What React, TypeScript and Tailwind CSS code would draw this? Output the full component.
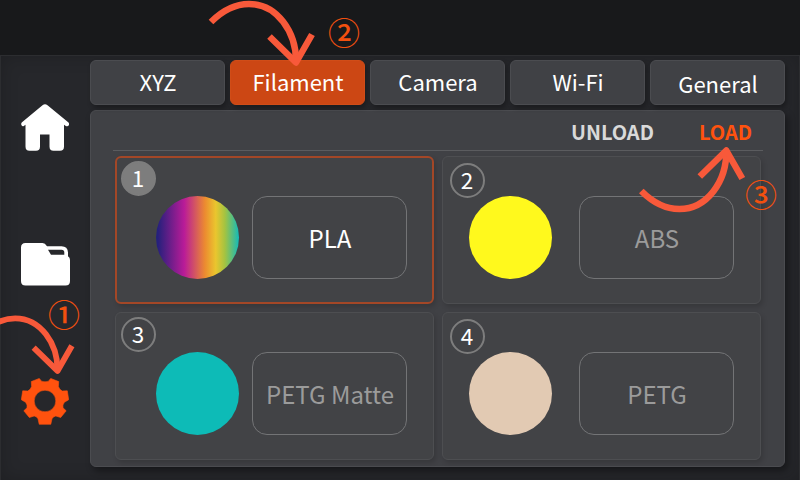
import React from "react";

const FONT = "font-['Noto_Sans_CJK_SC','Noto_Sans',sans-serif]";

function HomeIcon() {
  return (
    <svg className="block h-[47px] w-12" viewBox="0 0 48 47" fill="#fff">
      <path d="M21.5 1.2Q24 -0.8 26.5 1.2L47.2 18.2Q48.6 19.6 47.8 21.2Q46.8 23 44.8 22L43 20.8V42.5Q43 46.8 39 46.8H32.5Q28.500 46.8 28.500 42.5V30.500H19V42.500Q19 46.800 15 46.800H8.500Q4.500 46.800 4.500 42.500V20.800L2.800 22Q1.200 22.700 .4 21Q-.2 19.500 1 18.300Z" />
    </svg>
  );
}

function FolderIcon() {
  return (
    <svg className="block h-[43px] w-[49px]" viewBox="0 0 49 43">
      <path fill="#fff" fillRule="evenodd" d="M4.500 0H21.500Q24 0 26 3.300H40.500Q46.700 3.300 47 9.500V13.300Q49 14.500 49 17V38Q49 42.500 44.500 42.500H4.500Q0 42.500 0 38V4.500Q0 0 4.500 0ZM27 6.800L30 11.800H43.300V9.500Q43.300 6.800 40.500 6.800Z" />
    </svg>
  );
}

function GearIcon() {
  return (
    <svg className="block h-[47px] w-12" viewBox="0 0 48 47">
      <path fill="#ff520e" fillRule="evenodd" stroke="#ff520e" strokeWidth=".6" strokeLinejoin="round" d="M10.300 3.600L18.300 .4L20.500 3.200Q24 4.500 27.500 3.200L29.700 .4L37.700 3.600L37.400 8.500Q38.500 12 41.200 13L46.300 12.800L47.700 21.700L43.400 24.300Q41.200 27 42 29.800L45.200 32.800L39.700 39.500L34.800 38Q32 38.500 31 40.800L29.800 46.300H18.200L17 40.800Q16 38.500 13.200 38L8.300 39.500L2.800 32.800L6 29.800Q6.800 27 4.600 24.300L.3 21.700L1.700 12.800L6.800 13Q9.500 12 10.600 8.500ZM24 12.200A10.800 10.800 0 1 0 24 33.800A10.800 10.800 0 1 0 24 12.200Z" />
    </svg>
  );
}

function Tab({ label, active = false, low = false }: { label: string; active?: boolean; low?: boolean }) {
  return (
    <div
      className={`flex h-[45px] w-[135px] items-center justify-center rounded-md border pl-px text-[22px] leading-[40px] text-white shadow-[2px_3px_5px_rgba(0,0,0,0.3)] ${
        active ? "border-[#d04d18] bg-[#cc4714]" : "border-[#4b4c50] bg-[#404145]"
      } ${low ? "pt-px" : "pb-[3px]"}`}
    >
      {label}
    </div>
  );
}

interface Spool {
  slot: number;
  name: string;
  swatch: string;
  selected?: boolean;
}

const spools: Spool[] = [
  {
    slot: 1,
    name: "PLA",
    swatch: "bg-[linear-gradient(90deg,#25207c_2%,#b91b98_34%,#ec8b30_59%,#eac62e_72%,#a4c341_83%,#12baba_100%)]",
    selected: true,
  },
  { slot: 2, name: "ABS", swatch: "bg-[#fff91d]" },
  { slot: 3, name: "PETG Matte", swatch: "bg-[#0dbbb7]" },
  { slot: 4, name: "PETG", swatch: "bg-[#e2cab3]" },
];

function SpoolCard({ slot, name, swatch, selected }: Spool) {
  const right = slot % 2 === 0;
  return (
    <div
      className={`relative flex h-[148px] w-[319px] items-center rounded-md bg-[#424346] shadow-[2px_3px_5px_rgba(0,0,0,0.15)] ${
        selected ? "border-2 border-[#a34727]" : "border border-[#4d4e51]"
      } ${right ? "gap-[27px] pl-[26px]" : selected ? "gap-[13px] pl-[39px]" : "gap-[13px] pl-10"}`}
    >
      <div
        className={`absolute flex size-[35px] items-center justify-center rounded-full border-2 border-[#7d7d7d] pb-[3px] pr-px text-[22.500px] leading-none text-white ${
          right ? "left-[7px] top-[6px]" : selected ? "left-1 top-[3px] bg-[#7d7d7d]" : "left-[5px] top-1"
        }`}
      >
        {slot}
      </div>
      <div className={`mt-[15px] size-[83px] rounded-full ${swatch}`} />
      <div
        className={`mt-[15px] flex h-[83px] w-[155px] items-center justify-center whitespace-nowrap rounded-[15px] border border-[#737476] pl-px text-[24px] ${
          selected ? "text-white" : "text-[#9b9b9b]"
        }`}
      >
        {name}
      </div>
    </div>
  );
}

function Arrow({ transform }: { transform?: string }) {
  return (
    <g transform={transform}>
      <path d="M211 22C223 10 236 4 249 4C277 4 296.500 32 296 62.500" />
      <path d="M269.500 36.500L296 62.500L312 34.500" />
    </g>
  );
}

function Arrows() {
  return (
    <svg className="pointer-events-none absolute inset-0 h-[480px] w-[800px]" viewBox="0 0 800 480" fill="none" stroke="#f8593a" strokeWidth="6.500" strokeLinejoin="round">
      <Arrow />
      <Arrow transform="translate(-208.900 314.700) scale(.9)" />
      <Arrow transform="translate(430.300 213) scale(1 -1)" />
    </svg>
  );
}

function StepMark({ mark, place }: { mark: string; place: string }) {
  return <span className={`absolute text-[32px] font-medium leading-[34px] text-[#f2500f] ${place}`}>{mark}</span>;
}

export default function App() {
  return (
    <div className={`relative flex h-[480px] w-[800px] flex-col overflow-hidden bg-[#26272b] ${FONT}`}>
      <header className="h-[55px] shrink-0 bg-[#18191b]" />
      <div className="flex h-[425px] border border-b-0 border-[#2c2d30] shadow-[inset_0_0_18px_rgba(0,0,0,0.2)]">
        <nav className="flex w-[89px] shrink-0 flex-col pl-5 pt-12">
          <HomeIcon />
          <div className="mt-[92px]">
            <FolderIcon />
          </div>
          <div className="mt-[92px]">
            <GearIcon />
          </div>
        </nav>
        <main className="w-[695px] pt-1">
          <div className="flex gap-[5px]">
            <Tab label="XYZ" />
            <Tab label="Filament" active />
            <Tab label="Camera" />
            <Tab label="Wi-Fi" />
            <Tab label="General" low />
          </div>
          <section className="mt-[5px] h-[357px] rounded-md border border-[#4b4c50] bg-[#404145] shadow-[3px_4px_7px_rgba(0,0,0,0.4)]">
            <div className="ml-[22px] flex h-10 w-[650px] items-center justify-end gap-[45px] border-b border-[#5b5c5f] pr-[11px] pt-[3px] text-[20px] font-bold">
              <span className="text-[#d9d9d9]">UNLOAD</span>
              <span className="text-[#ff520e]">LOAD</span>
            </div>
            <div className="ml-6 mt-[5px] grid w-[646px] grid-cols-2 gap-2">
              {spools.map((spool) => (
                <SpoolCard key={spool.slot} {...spool} />
              ))}
            </div>
          </section>
        </main>
      </div>
      <Arrows />
      <StepMark mark="①" place="left-[48px] top-[296px]" />
      <StepMark mark="②" place="left-[328px] top-[14px]" />
      <StepMark mark="③" place="left-[745px] top-[176px]" />
    </div>
  );
}
